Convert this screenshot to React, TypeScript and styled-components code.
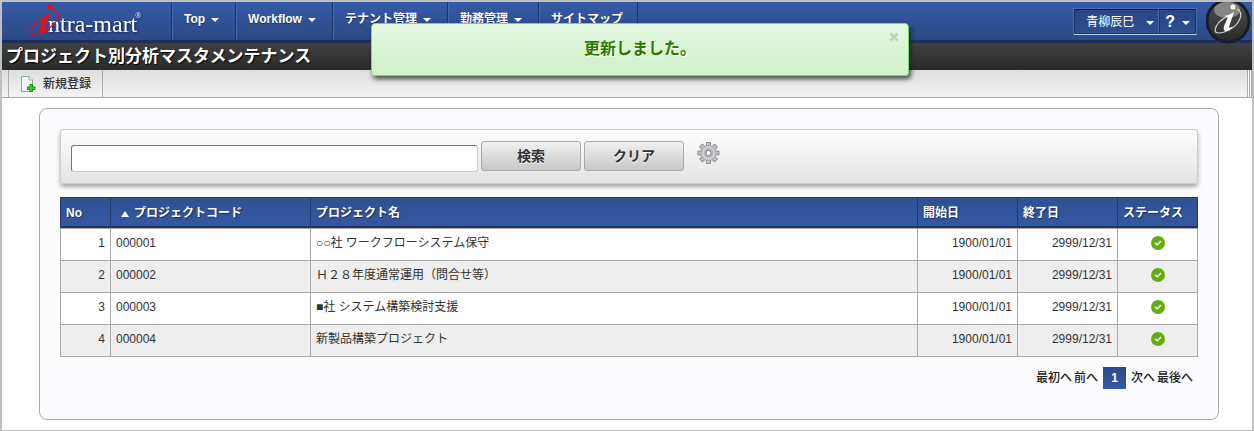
import React from 'react';
import styled, { createGlobalStyle } from 'styled-components';

const GlobalStyle = createGlobalStyle`
  *, *::before, *::after { box-sizing: border-box; }
  body {
    margin: 0;
    background: #fff;
    color: #333;
    font: 12px/18px "Liberation Sans", "Noto Sans CJK JP", sans-serif;
  }
  button, input { font: inherit; color: inherit; }
`;

const Page = styled.div`
  min-height: 100vh;
  border: 2px solid #c0c0c0;
  position: relative;
`;

const Header = styled.header`
  display: flex;
  height: 41px;
  background: linear-gradient(#375aa8, #2b4984);
  border-bottom: 3px solid #20305a;
`;

const LogoLink = styled.a`
  width: 170px;
  padding-left: 26px;
  border-right: 1px solid #1e3569;
`;

const Wordmark = styled.text`
  font-family: "Liberation Serif", serif;
  font-size: 24px;
  fill: #fff;
  filter: drop-shadow(1px 1px 1px #16264e);
`;

const Nav = styled.nav`
  display: flex;
  flex: 1;
`;

const NavButton = styled.button<{ $menu: boolean }>`
  display: flex;
  align-items: center;
  gap: 6px;
  height: 38px;
  padding: 0 ${(p) => (p.$menu ? '16px' : '14px')} 4px 11px;
  border: 0;
  border-left: 1px solid #4468b8;
  border-right: 1px solid #1e3569;
  background: none;
  color: #fff;
  font-weight: bold;
  white-space: nowrap;
  text-shadow: 0 1px 1px #1c2f5c;
`;

const Caret = styled.span`
  width: 0;
  height: 0;
  margin-top: 2px;
  border: 4px solid transparent;
  border-top-color: #fff;
  border-bottom: 0;
`;

const UserMenu = styled.div`
  display: flex;
  height: 27px;
  margin: 6px 9px 0 0;
  border: 1px solid #4a6ab0;
  border-bottom-color: #c5cfe6;
`;

const UserButton = styled.button<{ $help?: boolean }>`
  display: flex;
  align-items: center;
  gap: ${(p) => (p.$help ? '7px' : '12px')};
  padding: ${(p) => (p.$help ? '0 5px 0 5px' : '0 4px 0 11px')};
  border: 1px solid #1e3466;
  border-top-color: #0f1c3c;
  border-right-color: ${(p) => (p.$help ? '#1e3466' : '#4a6ab0')};
  background: linear-gradient(#2a4583, #2f4f92);
  color: #fff;
  font-size: ${(p) => (p.$help ? '16px' : '12px')};
  font-weight: ${(p) => (p.$help ? 'bold' : 'normal')};
`;

const ProductMark = styled.svg`
  display: block;
  width: 46px;
  height: 42px;
`;

const TitleBar = styled.div`
  height: 27px;
  padding: 0 4px;
  background: linear-gradient(#404040, #2a2a2a);
`;

const Title = styled.h1`
  margin: 0;
  color: #fff;
  font-size: 17px;
  line-height: 27px;
  text-shadow: 1px 1px 1px #000;
`;

const Toolbar = styled.div`
  display: flex;
  justify-content: space-between;
  height: 28px;
  padding-left: 6px;
  border-bottom: 1px solid #a9a9a9;
  background: linear-gradient(#dedede, #f3f3f3);
`;

const ToolButton = styled.button`
  display: flex;
  align-items: center;
  gap: 7px;
  padding: 1px 11px 0;
  border: 0;
  border-left: 1px solid #a9a9a9;
  border-right: 1px solid #a9a9a9;
  background: none;
  font-weight: 500;
`;

const Grip = styled.div`
  width: 5px;
  background: repeating-linear-gradient(90deg, #a9a9a9 0 1px, #fff 1px 2px);
`;

const Panel = styled.main`
  min-height: 312px;
  margin: 10px 33px 10px 37px;
  padding: 20px;
  border: 1px solid #a9a9a9;
  border-radius: 8px;
  background: #fcfcff;
`;

const SearchBar = styled.form`
  display: flex;
  height: 55px;
  margin-bottom: 13px;
  padding: 11px 10px;
  gap: 3px;
  border: 1px solid #ccc;
  border-radius: 3px;
  background: linear-gradient(#fff, #e2e2e2);
  box-shadow: 0 3px 4px #aaa;
`;

const SearchInput = styled.input`
  width: 407px;
  height: 27px;
  margin-top: 4px;
  padding: 0 6px;
  border: 1px solid #ccc;
  border-top-color: #777;
  border-left-color: #777;
  border-radius: 3px;
  background: #fff;
`;

const FormButton = styled.button`
  width: 100px;
  height: 30px;
  padding: 0;
  border: 1px solid #a9a9a9;
  border-radius: 3px;
  background: linear-gradient(#f0f0f0, #c8c8c8);
  font-size: 14px;
  font-weight: bold;
  text-shadow: 0 1px 0 #fff;
`;

const IconButton = styled.button`
  width: 24px;
  height: 24px;
  margin-left: 10px;
  padding: 0;
  border: 0;
  background: none;
`;

const Table = styled.table`
  width: 100%;
  table-layout: fixed;
  border-collapse: collapse;
`;

const HeadCell = styled.th<{ $width?: number }>`
  width: ${(p) => (p.$width ? `${p.$width}px` : 'auto')};
  height: 31px;
  padding: 0 5px;
  border: 1px solid #24396c;
  border-bottom-color: #a9a9a9;
  background: linear-gradient(#2f5192, #3658a3);
  box-shadow: inset 0 -2px #22355f;
  color: #fff;
  text-align: left;
  white-space: nowrap;
  text-shadow: 1px 1px 1px #1c2f5c;
`;

const SortMark = styled.span`
  display: inline-block;
  margin: 0 5px;
  border: 4px solid transparent;
  border-top: 0;
  border-bottom: 6px solid #fff;
`;

const Row = styled.tr`
  background: #fff;
  &:nth-child(even) { background: #eee; }
`;

const Cell = styled.td<{ $align?: 'right' | 'center' }>`
  height: 32px;
  padding: 0 5px 3px;
  border: 1px solid #a9a9a9;
  text-align: ${(p) => p.$align ?? 'left'};
  svg { display: block; margin: 0 auto; }
`;

const Pager = styled.nav`
  display: flex;
  justify-content: flex-end;
  align-items: center;
  gap: 2px;
  margin-top: 10px;
  padding-right: 5px;
`;

const PageLink = styled.a`
  color: #222;
  font-weight: 500;
  text-decoration: none;
`;

const CurrentPage = styled.a`
  width: 23px;
  margin: 0 3px;
  background: linear-gradient(#2b4984, #375aa8);
  color: #fff;
  font-weight: bold;
  line-height: 22px;
  text-align: center;
  text-decoration: none;
`;

const Toast = styled.div`
  position: absolute;
  top: 21px;
  left: 50%;
  width: 538px;
  height: 53px;
  margin-left: -256px;
  border: 1px solid #6fdc6f;
  border-radius: 4px;
  background: linear-gradient(#e2f8e2, #cff2c8);
  box-shadow: 2px 3px 5px rgba(20, 40, 10, 0.8);
  color: #2d7a00;
  font-size: 16px;
  font-weight: bold;
  line-height: 50px;
  text-align: center;
  text-shadow: 1px 1px 0 #fff;
`;

const CloseButton = styled.button`
  position: absolute;
  top: 7px;
  right: 8px;
  display: flex;
  padding: 1px;
  border: 0;
  background: none;
`;

function Logo() {
  return (
    <svg width="120" height="38" viewBox="28 2 120 38" role="img" aria-label="intra-mart">
      <Wordmark x="48" y="32">
        ntra-mart<tspan dx="-2" dy="-14" fontSize="8">®</tspan>
      </Wordmark>
      <path d="M52 10C60 9 60 18 54 24C47 31 37 36 32 34C29 31 34 23 42 17" fill="none" stroke="#d8161c" strokeWidth="1.3" />
      <path d="M40 18Q47 16 51 11Q48 20 45 28Q45 31 50 27Q46 34 42 34Q38 33 40 27L43 19Z" fill="#d8161c" />
      <circle cx="50" cy="7" r="2.8" fill="#d8161c" />
    </svg>
  );
}

function BrandMark() {
  return (
    <ProductMark viewBox="0 0 46 42" aria-hidden="true">
      <defs>
        <linearGradient id="mark" x1="0" y1="0" x2="0" y2="1">
          <stop offset="0" stopColor="#505050" />
          <stop offset="1" stopColor="#2a2a2a" />
        </linearGradient>
      </defs>
      <circle cx="22" cy="19" r="22.5" fill="#161c2c" />
      <circle cx="22" cy="19" r="19.5" fill="url(#mark)" />
      <ellipse cx="21" cy="8" rx="13" ry="8" fill="#858585" />
      <path d="M31 7C39 11 33 23 23 28C15 32 9 32 9 28C10 22 16 17 22 14" fill="none" stroke="#d8d8d8" strokeWidth="1.2" />
      <path d="M18 14Q24 13 28 10L23 25Q23 27 27 24Q23 30 19 29Q17 28 18 24L22 15Z" fill="#fff" />
      <circle cx="27" cy="5" r="2.5" fill="#fff" />
    </ProductMark>
  );
}

function NewDocumentIcon() {
  return (
    <svg width="16" height="16" viewBox="0 0 16 16" aria-hidden="true">
      <path d="M1.5 .5H9L12.5 4V15.5H1.5Z" fill="#f2f8f6" stroke="#8fa8a4" />
      <path d="M9 .5V4H12.5" fill="#fff" stroke="#8fa8a4" />
      <path d="M10 8.5H12.5V11H15V13.5H12.5V16H10V13.5H7.5V11H10Z" fill="#3bd023" stroke="#178a14" />
    </svg>
  );
}

function GearIcon() {
  return (
    <svg width="24" height="24" viewBox="0 0 24 24" aria-hidden="true">
      <g fill="#c8c8cc" stroke="#8c8c90">
        {[0, 45, 90, 135, 180, 225, 270, 315].map((a) => (
          <path key={a} d="M9.5 6V1.5H13.5V6" transform={`rotate(${a} 11.5 12)`} />
        ))}
        <circle cx="11.5" cy="12" r="7.5" stroke="#a0a0a4" />
      </g>
      <circle cx="11.5" cy="12" r="7" fill="#cdcdd1" />
      <circle cx="11.5" cy="12" r="4.5" fill="#b2b2b6" />
      <circle cx="11.5" cy="12" r="2.5" fill="#fff" stroke="#88888c" />
    </svg>
  );
}

function CheckIcon() {
  return (
    <svg width="14" height="14" viewBox="0 0 14 14" role="img" aria-label="有効">
      <circle cx="7" cy="7" r="7" fill="#62ad0e" />
      <path d="M4 7L6.2 9L10 5" fill="none" stroke="#fff" strokeWidth="1.6" />
    </svg>
  );
}

const menus = [
  { label: 'Top', menu: true },
  { label: 'Workflow', menu: true },
  { label: 'テナント管理', menu: true },
  { label: '勤務管理', menu: true },
  { label: 'サイトマップ', menu: false },
];

const projects = [
  { code: '000001', name: '○○社 ワークフローシステム保守' },
  { code: '000002', name: 'Ｈ２８年度通常運用（問合せ等）' },
  { code: '000003', name: '■社 システム構築検討支援' },
  { code: '000004', name: '新製品構築プロジェクト' },
];

export default function App() {
  return (
    <>
      <GlobalStyle />
      <Page>
        <Header>
          <LogoLink href="#"><Logo /></LogoLink>
          <Nav>
            {menus.map((m) => (
              <NavButton key={m.label} type="button" $menu={m.menu}>{m.label}{m.menu && <Caret />}</NavButton>
            ))}
          </Nav>
          <UserMenu>
            <UserButton type="button">青柳辰巳<Caret /></UserButton>
            <UserButton type="button" $help>?<Caret /></UserButton>
          </UserMenu>
          <BrandMark />
        </Header>
        <TitleBar><Title>プロジェクト別分析マスタメンテナンス</Title></TitleBar>
        <Toolbar>
          <ToolButton type="button"><NewDocumentIcon />新規登録</ToolButton>
          <Grip />
        </Toolbar>
        <Panel>
          <SearchBar onSubmit={(e) => e.preventDefault()}>
            <SearchInput type="text" aria-label="検索キーワード" />
            <FormButton type="submit">検索</FormButton>
            <FormButton type="reset">クリア</FormButton>
            <IconButton type="button" aria-label="設定"><GearIcon /></IconButton>
          </SearchBar>
          <Table>
            <thead>
              <tr>
                <HeadCell $width={50}>No</HeadCell>
                <HeadCell $width={200}><SortMark />プロジェクトコード</HeadCell>
                <HeadCell>プロジェクト名</HeadCell>
                <HeadCell $width={100}>開始日</HeadCell>
                <HeadCell $width={100}>終了日</HeadCell>
                <HeadCell $width={80}>ステータス</HeadCell>
              </tr>
            </thead>
            <tbody>
              {projects.map((p, i) => (
                <Row key={p.code}>
                  <Cell $align="right">{i + 1}</Cell>
                  <Cell>{p.code}</Cell>
                  <Cell>{p.name}</Cell>
                  <Cell $align="right">1900/01/01</Cell>
                  <Cell $align="right">2999/12/31</Cell>
                  <Cell $align="center"><CheckIcon /></Cell>
                </Row>
              ))}
            </tbody>
          </Table>
          <Pager aria-label="ページ">
            <PageLink href="#">最初へ</PageLink>
            <PageLink href="#">前へ</PageLink>
            <CurrentPage href="#" aria-current="page">1</CurrentPage>
            <PageLink href="#">次へ</PageLink>
            <PageLink href="#">最後へ</PageLink>
          </Pager>
        </Panel>
        <Toast role="status">
          更新しました。
          <CloseButton type="button" aria-label="閉じる">
            <svg width="10" height="10" viewBox="0 0 10 10"><path d="M1.5 1.5L8.5 8.5M8.5 1.5L1.5 8.5" stroke="#c6cfc6" strokeWidth="2.5" /></svg>
          </CloseButton>
        </Toast>
      </Page>
    </>
  );
}
